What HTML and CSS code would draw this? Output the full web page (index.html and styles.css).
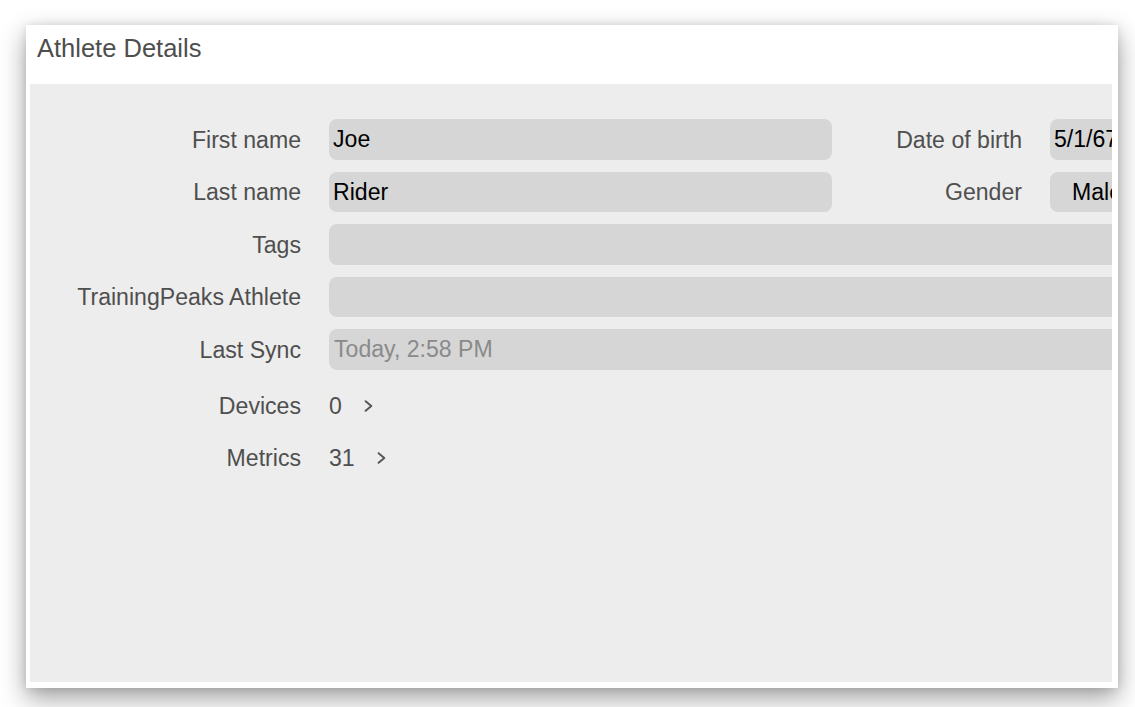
FILE: index.html
```html
<!DOCTYPE html>
<html lang="en">
<head>
<meta charset="utf-8">
<title>Athlete Details</title>
<link rel="stylesheet" href="styles.css">
</head>
<body>
<section class="sheet">
  <header class="sheet-header">
    <h1 class="sheet-title">Athlete Details</h1>
  </header>
  <div class="sheet-body">
    <div class="form-grid">
      <label class="label">First name</label>
      <div class="field">Joe</div>
      <label class="label">Date of birth</label>
      <div class="field">5/1/67</div>

      <label class="label">Last name</label>
      <div class="field">Rider</div>
      <label class="label">Gender</label>
      <div class="field field-select">Male</div>

      <label class="label">Tags</label>
      <div class="field field-wide"></div>

      <label class="label">TrainingPeaks Athlete</label>
      <div class="field field-wide"></div>

      <label class="label">Last Sync</label>
      <div class="field field-wide field-readonly">Today, 2:58 PM</div>

      <span class="label">Devices</span>
      <div class="link-value">0
        <svg class="chevron" viewBox="0 0 9 12" width="9" height="12"><path d="M1.6 1.2 L7.3 6 L1.6 10.8"/></svg>
      </div>

      <span class="label">Metrics</span>
      <div class="link-value">31
        <svg class="chevron" viewBox="0 0 9 12" width="9" height="12"><path d="M1.6 1.2 L7.3 6 L1.6 10.8"/></svg>
      </div>
    </div>
  </div>
</section>
</body>
</html>
```

FILE: styles.css
```css
html, body {
  margin: 0;
  padding: 0;
  background: #ffffff;
}

body {
  font-family: "Liberation Sans", Arial, Helvetica, sans-serif;
  padding: 25px 0 0 26px;
  min-height: 707px;
  box-sizing: border-box;
}

.sheet {
  width: 1092px;
  height: 663px;
  background: #ffffff;
  box-shadow: 0 10px 24px rgba(0, 0, 0, 0.38), 0 0 8px rgba(0, 0, 0, 0.1);
  display: flex;
  flex-direction: column;
  box-sizing: border-box;
  padding: 0 6px 6px 4px;
}

.sheet-header {
  height: 59px;
  flex: none;
  display: flex;
  align-items: flex-start;
}

.sheet-title {
  margin: 0;
  padding: 8px 0 0 7px;
  font-size: 25.5px;
  font-weight: normal;
  color: #4e4e4e;
  line-height: 30px;
}

.sheet-body {
  flex: 1;
  background: #ededed;
  overflow: hidden;
  padding-top: 35px;
}

.form-grid {
  display: grid;
  grid-template-columns: 271px 503px 162px 260px;
  grid-template-rows: repeat(5, 40.5px) 48px 32px;
  column-gap: 28px;
  row-gap: 12px;
  width: max-content;
  font-size: 23.1px;
}

.label {
  grid-column: 1;
  color: #4f4f4f;
  text-align: right;
  align-self: center;
  line-height: 26px;
  margin-top: 1px;
}

.field + .label {
  grid-column: auto;
}

.field {
  background: #d6d6d6;
  border-radius: 8px;
  color: #000000;
  padding: 0 4px;
  display: flex;
  align-items: center;
  line-height: 26px;
  white-space: nowrap;
}

.field-select {
  padding-left: 22px;
}

.field-wide {
  grid-column: 2 / 5;
}

.field-readonly {
  color: #8a8a8a;
  padding-left: 5px;
}

.link-value {
  grid-column: 2 / 5;
  display: flex;
  align-items: center;
  color: #4f4f4f;
  line-height: 26px;
}

.chevron {
  margin-left: 22px;
  fill: none;
  stroke: #555555;
  stroke-width: 1.9;
  stroke-linecap: round;
  stroke-linejoin: round;
}
```
